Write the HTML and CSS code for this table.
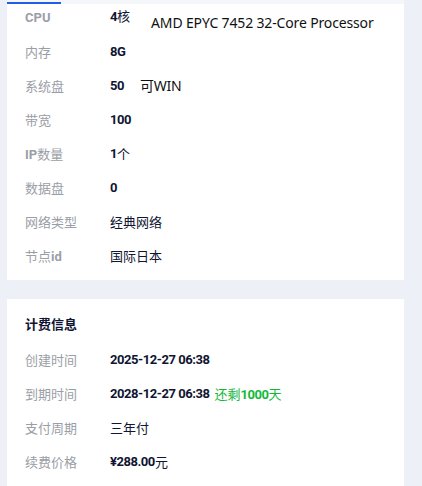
FILE: index.html
```html
<!DOCTYPE html>
<html lang="zh-CN">
<head>
<meta charset="utf-8">
<title>实例详情</title>
<link rel="stylesheet" href="styles.css">
</head>
<body>
<div class="page">
  <div class="tabstrip"><div class="tab-ink"></div></div>
  <section class="card card-spec">
    <div class="row">
      <div class="label">CPU</div>
      <div class="value cpu"><span class="cpu-count">4<span class="cj">核</span></span><span class="extra cpu-model">AMD EPYC 7452 32-Core Processor</span></div>
    </div>
    <div class="row">
      <div class="label"><span class="cj">内存</span></div>
      <div class="value">8G</div>
    </div>
    <div class="row">
      <div class="label"><span class="cj">系统盘</span></div>
      <div class="value">50<span class="extra win">可WIN</span></div>
    </div>
    <div class="row">
      <div class="label"><span class="cj">带宽</span></div>
      <div class="value">100</div>
    </div>
    <div class="row">
      <div class="label">IP<span class="cj">数量</span></div>
      <div class="value">1<span class="cj">个</span></div>
    </div>
    <div class="row">
      <div class="label"><span class="cj">数据盘</span></div>
      <div class="value">0</div>
    </div>
    <div class="row">
      <div class="label"><span class="cj">网络类型</span></div>
      <div class="value"><span class="cj">经典网络</span></div>
    </div>
    <div class="row">
      <div class="label"><span class="cj">节点</span>id</div>
      <div class="value"><span class="cj">国际日本</span></div>
    </div>
  </section>

  <section class="card card-bill">
    <h3 class="card-title">计费信息</h3>
    <div class="row">
      <div class="label"><span class="cj">创建时间</span></div>
      <div class="value">2025-12-27 06:38</div>
    </div>
    <div class="row">
      <div class="label"><span class="cj">到期时间</span></div>
      <div class="value">2028-12-27 06:38<span class="remain"><span class="cj">还剩</span>1000<span class="cj">天</span></span></div>
    </div>
    <div class="row">
      <div class="label"><span class="cj">支付周期</span></div>
      <div class="value"><span class="cj">三年付</span></div>
    </div>
    <div class="row">
      <div class="label"><span class="cj">续费价格</span></div>
      <div class="value">¥288.00<span class="cj">元</span></div>
    </div>
  </section>
</div>
</body>
</html>
```

FILE: styles.css
```css
* { box-sizing: border-box; }

html, body {
  margin: 0;
  padding: 0;
  background: #edf0f7;
  overflow: hidden;
}

body {
  font-family: Roboto, "Noto Sans CJK SC", sans-serif;
  font-size: 13px;
  color: #0f1532;
  width: 422px;
  height: 486px;
}

.page {
  position: relative;
  padding: 0 18px 0 7px;
  display: flex;
  flex-direction: column;
  gap: 19px;
}

.tabstrip {
  position: absolute;
  top: 0;
  left: 7px;
  right: 18px;
  height: 4px;
  background: #f5f6f9;
  z-index: 2;
}

.tab-ink {
  width: 54px;
  height: 2px;
  margin-top: 2px;
  background: #1f5fe8;
}

.card {
  background: #ffffff;
  padding: 0 18px;
}

.card-spec {
  padding-bottom: 8px;
}

.card-bill {
  padding-top: 9px;
  padding-bottom: 20px;
}

.card-title {
  margin: 0;
  height: 34px;
  line-height: 34px;
  font-size: 13px;
  font-weight: 700;
  color: #0f1532;
}

.row {
  display: grid;
  grid-template-columns: 85px 1fr;
  align-items: center;
  height: 34px;
}

.label {
  color: #9a9ea6;
  font-weight: 700;
  white-space: nowrap;
}

.value {
  font-weight: 700;
  color: #0f1532;
  white-space: nowrap;
  letter-spacing: -0.45px;
  display: flex;
  align-items: center;
}

.cj {
  font-weight: 400;
  letter-spacing: 0;
  font-family: "Noto Sans CJK SC", sans-serif;
}

.value.cpu {
  align-self: start;
  align-items: flex-start;
}

.cpu-count {
  line-height: 32px;
}

.extra {
  font-family: "Noto Sans", "Noto Sans CJK SC", sans-serif;
  font-weight: 400;
  font-size: 14px;
  letter-spacing: -0.15px;
  color: #111111;
}

.cpu-model {
  margin-top: 14px;
  margin-left: 21px;
  line-height: 18px;
}

.win {
  margin-left: 16px;
  letter-spacing: -0.3px;
}

.remain {
  margin-left: 5px;
  color: #13b83b;
}
```
